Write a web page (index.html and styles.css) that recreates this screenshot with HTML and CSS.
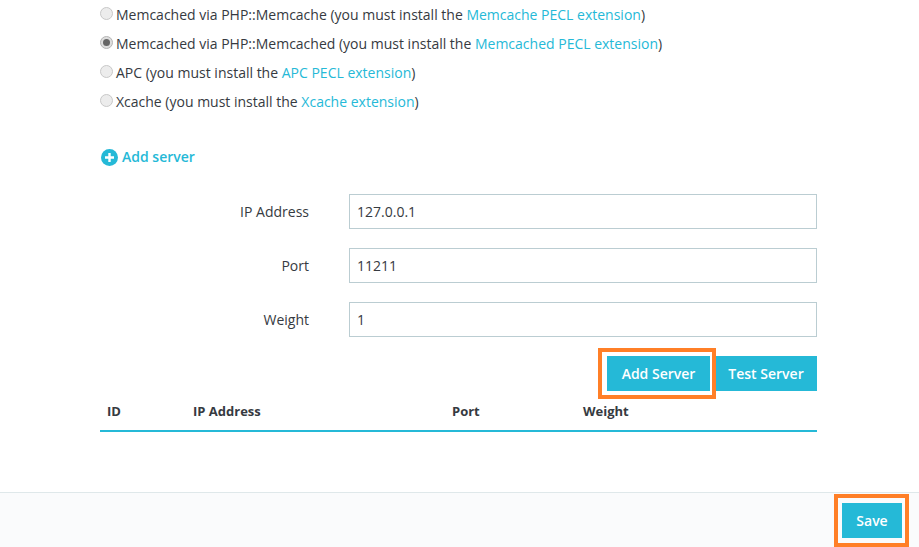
FILE: index.html
```html
<!DOCTYPE html>
<html lang="en">
<head>
    <meta charset="UTF-8">
    <title>Memcached settings</title>
    <link rel="stylesheet" href="styles.css">
</head>
<body>

    <div class="content">
        <div class="options">
            <label class="option"><span class="radio"></span>Memcached via PHP::Memcache (you must install the&nbsp;<a href="#">Memcache PECL extension</a>)</label>
            <label class="option"><span class="radio checked"></span>Memcached via PHP::Memcached (you must install the&nbsp;<a href="#">Memcached PECL extension</a>)</label>
            <label class="option"><span class="radio"></span>APC (you must install the&nbsp;<a href="#">APC PECL extension</a>)</label>
            <label class="option"><span class="radio"></span>Xcache (you must install the&nbsp;<a href="#">Xcache extension</a>)</label>
        </div>

        <a href="#" class="add-link">
            <svg class="add-icon" width="17" height="17" viewBox="0 0 17 17">
                <circle cx="8.5" cy="8.5" r="8.5" fill="#25b9d7"/>
                <path d="M8.5 4v9M4 8.5h9" stroke="#fff" stroke-width="2.4"/>
            </svg>
            Add server
        </a>

        <div class="form">
            <div class="form-row">
                <label class="form-label">IP Address</label>
                <input class="form-input" type="text" value="127.0.0.1">
            </div>
            <div class="form-row">
                <label class="form-label">Port</label>
                <input class="form-input" type="text" value="11211">
            </div>
            <div class="form-row">
                <label class="form-label">Weight</label>
                <input class="form-input" type="text" value="1">
            </div>
        </div>

        <div class="actions">
            <div class="marked">
                <button class="btn btn-add">Add Server</button>
                <span class="mark mark-add"></span>
            </div>
            <button class="btn btn-test">Test Server</button>
        </div>

        <table class="servers">
            <thead>
                <tr>
                    <th class="col-id">ID</th>
                    <th class="col-ip">IP Address</th>
                    <th class="col-port">Port</th>
                    <th>Weight</th>
                </tr>
            </thead>
        </table>
    </div>

    <div class="footer">
        <div class="marked">
            <button class="btn btn-save">Save</button>
            <span class="mark mark-save"></span>
        </div>
    </div>

</body>
</html>
```

FILE: styles.css
```css
body {
    margin: 0;
    height: 547px;
    overflow: hidden;
    background: #fff;
    font-family: "Open Sans", sans-serif;
    font-size: 14px;
    color: #363a41;
    display: flex;
    flex-direction: column;
}
a {
    color: #25b9d7;
    text-decoration: none;
}
.content {
    width: 717px;
    margin-left: 100px;
    flex: 1;
}
.option {
    display: flex;
    align-items: center;
    height: 29px;
    white-space: nowrap;
}
.radio {
    width: 13px;
    height: 13px;
    margin-right: 3px;
    margin-top: -3px;
    border-radius: 50%;
    border: 1px solid #c8c8c8;
    background: #ececec;
    box-sizing: border-box;
    flex: none;
    display: flex;
    align-items: center;
    justify-content: center;
}
.radio.checked {
    border-color: #b5b5b5;
    background: #dedede;
}
.radio.checked::after {
    content: "";
    width: 7px;
    height: 7px;
    border-radius: 50%;
    background: #666;
}
.add-link {
    display: flex;
    align-items: center;
    gap: 4px;
    margin-top: 28px;
    margin-left: 1px;
    height: 24px;
    font-weight: 600;
}
.add-icon {
    margin-top: 2px;
}
.form {
    margin-top: 26px;
}
.form-row {
    display: flex;
    align-items: center;
    margin-bottom: 19px;
}
.form-label {
    width: 209px;
    text-align: right;
    margin-right: 40px;
}
.form-input {
    flex: 1;
    height: 35px;
    box-sizing: border-box;
    border: 1px solid #bbcdd2;
    padding: 0 7px;
    font-family: inherit;
    font-size: 14px;
    color: #363a41;
    min-width: 0;
}
.actions {
    display: flex;
    justify-content: flex-end;
    gap: 5px;
}
.btn {
    height: 35px;
    border: none;
    background: #25b9d7;
    color: #fff;
    font-family: inherit;
    font-size: 14px;
    font-weight: 600;
    padding: 0;
    display: block;
}
.btn-add {
    width: 103px;
}
.btn-test {
    width: 102px;
}
.btn-save {
    width: 60px;
}
.marked {
    position: relative;
}
.mark {
    position: absolute;
    border: 4px solid #ff7f27;
    box-sizing: border-box;
}
.mark-add {
    left: -9px;
    top: -8px;
    width: 118px;
    height: 51px;
}
.mark-save {
    left: -8px;
    top: -9px;
    width: 75px;
    height: 53px;
}
.servers {
    width: 100%;
    border-collapse: collapse;
    margin-top: 1px;
}
.servers th {
    height: 38px;
    padding: 0;
    text-align: left;
    font-weight: 700;
    font-size: 13px;
    border-bottom: 2px solid #25b9d7;
}
.col-id {
    width: 93px;
    padding-left: 7px !important;
    box-sizing: border-box;
}
.col-ip {
    width: 259px;
}
.col-port {
    width: 131px;
}
.footer {
    height: 55px;
    box-sizing: border-box;
    border-top: 1px solid #dfe8ea;
    background: #fafbfc;
    display: flex;
    justify-content: flex-end;
    padding: 10px 17px 0 0;
}
```
